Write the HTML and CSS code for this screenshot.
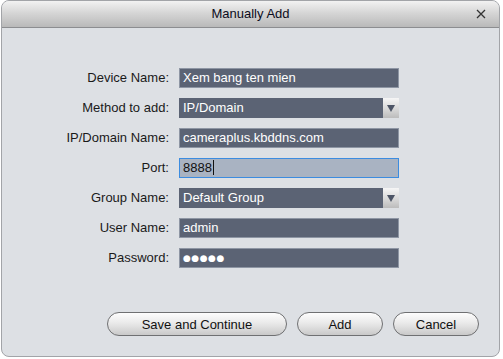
FILE: index.html
```html
<!doctype html>
<html lang="en">
  <head>
    <meta charset="UTF-8" />
    <title>Manually Add</title>
    <link rel="stylesheet" href="styles.css">
  </head>
  <body>
    <div class="dialog">
      <div class="titlebar">
        <span class="title">Manually Add</span>
        <svg class="close" width="10" height="10" viewBox="0 0 10 10"><path d="M1 1L9 9M9 1L1 9" stroke="#333" stroke-width="1.3"/></svg>
      </div>

      <div class="form">
        <label>Device Name:</label>
        <div class="field">Xem bang ten mien</div>

        <label>Method to add:</label>
        <div class="field combo">IP/Domain<span class="arrow"></span></div>

        <label>IP/Domain Name:</label>
        <div class="field">cameraplus.kbddns.com</div>

        <label>Port:</label>
        <div class="field focused">8888<span class="caret"></span></div>

        <label>Group Name:</label>
        <div class="field combo">Default Group<span class="arrow"></span></div>

        <label>User Name:</label>
        <div class="field">admin</div>

        <label>Password:</label>
        <div class="field dots">&#9679;&#9679;&#9679;&#9679;&#9679;</div>
      </div>

      <div class="buttons">
        <button class="wide">Save and Continue</button>
        <button>Add</button>
        <button>Cancel</button>
      </div>
    </div>
  </body>
</html>
```

FILE: styles.css
```css
html, body { margin: 0; padding: 0; background: #ffffff; font-family: "Liberation Sans", Arial, sans-serif; font-size: 13px; }
.dialog { margin-left: 1px; width: 499px; height: 357px; box-sizing: border-box; border: 1px solid #a2a4a8; border-radius: 8px; background: #dde0e4; overflow: hidden; }
.titlebar { height: 27px; box-sizing: border-box; padding-bottom: 2px; border-bottom: 1px solid #8c8d90; background: linear-gradient(#f2f2f2, #d6d6d6 45%, #b9b9b9); display: flex; align-items: center; justify-content: center; position: relative; }
.title { color: #0c0c1c; font-size: 13px; }
.close { position: absolute; right: 13px; top: 8px; }
.form { display: grid; grid-template-columns: 167px 220px; column-gap: 10px; row-gap: 10px; padding-top: 40px; }
label { text-align: right; color: #1a1a1a; line-height: 20px; height: 20px; }
.field { height: 20px; box-sizing: border-box; background: #5b6374; border: 1px solid #8e96a4; color: #ffffff; padding: 0 3px; line-height: 18px; position: relative; }
.field.combo { border-color: #5b6374; }
.arrow { position: absolute; right: -1px; top: -1px; width: 16px; height: 20px; background: linear-gradient(#f6f6f6, #d8d8d8 55%, #bcbcbc); }
.arrow::after { content: ""; position: absolute; left: 4px; top: 7px; border-left: 4px solid transparent; border-right: 4px solid transparent; border-top: 7px solid #4d5566; }
.field.focused { background: #a9b3c2; border-color: #3c8ce0; color: #111; }
.caret { display: inline-block; width: 1px; height: 15px; background: #111; vertical-align: -3px; margin-left: 1px; }
.dots { font-family: "DejaVu Sans", sans-serif; font-size: 9px; letter-spacing: 0.5px; line-height: 18px; }
.buttons { display: flex; justify-content: flex-end; gap: 10px; padding: 44px 20px 0 0; }
button { width: 86px; height: 24px; border: 1px solid #6f7072; border-radius: 12px; background: linear-gradient(#fdfdfd, #eaeaea 45%, #c9c9c9); color: #111; font-family: "Liberation Sans", Arial, sans-serif; font-size: 13px; padding: 0; }
button.wide { width: 180px; }
```
